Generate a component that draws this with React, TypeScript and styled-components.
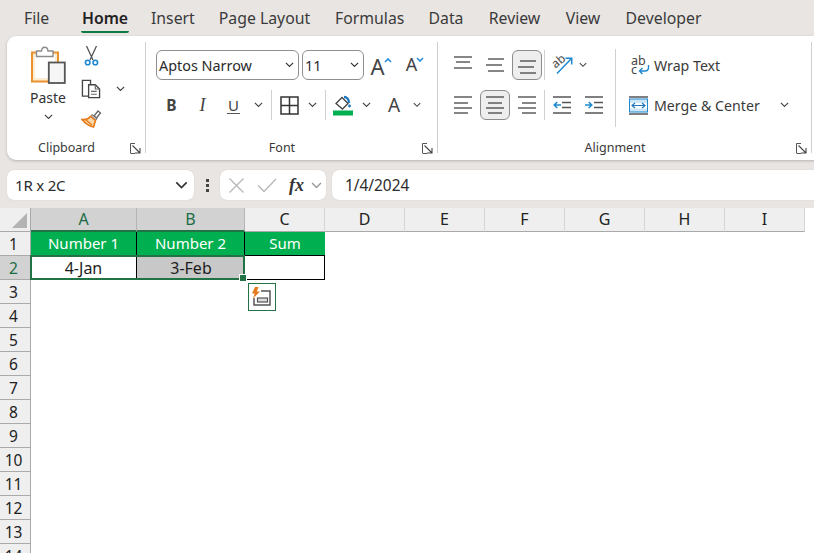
import React from "react";
import styled, { createGlobalStyle } from "styled-components";

const Global = createGlobalStyle`
  html, body { margin: 0; padding: 0; background: #e9e5e3; }
  * { box-sizing: border-box; }
`;

const UI = `"Noto Sans", "Open Sans", "Liberation Sans", sans-serif`;
const GREEN = "#217346";

const Page = styled.div`
  width: 814px; height: 553px; overflow: hidden; background: #e9e5e3;
  font-family: ${UI}; color: #333; display: flex; flex-direction: column;
`;
const TabBar = styled.nav`
  height: 36px; display: flex; align-items: flex-start; padding-left: 24px; flex: none;
`;
const Tab = styled.div<{ $w: number; $active?: boolean }>`
  width: ${p => p.$w}px; flex: none;
  height: 33px; line-height: 36px; font-size: 15.8px; white-space: nowrap; text-align: center;
  color: ${p => (p.$active ? "#222" : "#3a3a3a")};
  font-weight: ${p => (p.$active ? 600 : 400)};
  border-bottom: 2.5px solid ${p => (p.$active ? "#0e7a43" : "transparent")};
  border-radius: 0 0 2px 2px;
`;
const TabGap = styled.div<{ $w: number }>`
  width: ${p => p.$w}px; flex: none;
`;
const Ribbon = styled.section`
  flex: none; height: 124px; width: 830px; margin-left: 7px; padding: 6px 0 7px;
  background: #fff; border-radius: 9px; box-shadow: 0 1px 3px rgba(0,0,0,.22); display: flex;
`;
const Group = styled.div<{ $w: number }>`
  width: ${p => p.$w}px; flex: none; display: flex; flex-direction: column; border-right: 1px solid #cfcfcf;
`;
const GroupBody = styled.div<{ $top?: number; $left?: number }>`
  height: 95px; flex: none; display: flex; padding-top: ${p => p.$top ?? 8}px; padding-left: ${p => p.$left ?? 10}px;
`;
const Footer = styled.div`
  height: 16px; flex: none; display: flex; align-items: center; padding: 4px 4px 0 0;
`;
const GroupLabel = styled.div`
  flex: 1; text-align: center; font-size: 12.5px; line-height: 16px; color: #3a3a3a; margin-right: 4px; padding-top: 1px;
`;
const Launcher = styled.svg`
  width: 11px; height: 11px; flex: none; margin-top: 2px;
`;
const PasteCol = styled.div`
  width: 50px; margin-left: 9px; display: flex; flex-direction: column; align-items: center; padding-top: 4px;
`;
const PasteLabel = styled.div`
  font-size: 14px; line-height: 20px; margin-top: 4px; color: #333;
`;
const PasteChevron = styled.div`
  display: flex; margin-top: 6px;
`;
const SmallCol = styled.div`
  margin-left: 2px; display: flex; flex-direction: column;
`;
const SmallRow = styled.div`
  height: 31px; display: flex; align-items: center;
`;
const Stack = styled.div`
  display: flex; flex-direction: column; gap: 10px;
`;
const Row = styled.div`
  height: 30px; display: flex; align-items: center;
`;
const Btn = styled.div<{ $w: number; $ml?: number; $on?: boolean }>`
  width: ${p => p.$w}px; height: 30px; flex: none; margin-left: ${p => p.$ml ?? 0}px;
  display: flex; align-items: center; justify-content: center; border-radius: 6px;
  border: 1px solid ${p => (p.$on ? "#8c8c8c" : "transparent")};
  background: ${p => (p.$on ? "#eeeeee" : "transparent")};
`;
const Divider = styled.div<{ $ml?: number }>`
  width: 1px; height: 30px; background: #d0d0d0; flex: none; margin-left: ${p => p.$ml ?? 0}px;
`;
const Select = styled.div<{ $w: number; $ml?: number }>`
  width: ${p => p.$w}px; height: 30px; flex: none; margin-left: ${p => p.$ml ?? 0}px;
  border: 1px solid #8f8f8f; border-radius: 6px; display: flex; align-items: center; justify-content: space-between;
  padding: 0 4px 0 2px; font-size: 14.4px; color: #2b2b2b; background: #fff;
`;
const BoldGlyph = styled.span`font: 700 15.5px ${UI}; color: #444;`;
const ItalicGlyph = styled.span`font: italic 400 18px "Liberation Serif", serif; color: #444;`;
const UnderGlyph = styled.span`font: 400 15px ${UI}; color: #444; border-bottom: 1.5px solid #555; line-height: 16px; padding: 0 1px;`;
const LetterGlyph = styled.span<{ $size: number }>`
  font: 400 ${p => p.$size}px ${UI}; color: #444; line-height: 1;
`;
const CaretWrap = styled.div`
  display: flex; align-items: flex-start; height: 20px;
`;
const CaretSvg = styled.svg`
  margin: 2px 0 0 -1px;
`;
const AlignLeft = styled.div`
  display: flex; flex-direction: column; gap: 10px;
`;
const AlignRight = styled.div`
  margin-left: 6px; margin-top: -1px; height: 78px; border-left: 1px solid #d0d0d0; padding: 1px 0 0 13px;
  display: flex; flex-direction: column; gap: 10px;
`;
const ActionRow = styled.div`
  height: 30px; display: flex; align-items: center; font-size: 14.2px; color: #3a3a3a; white-space: nowrap;
`;
const ActionIcon = styled.div<{ $w: number; $ml: number }>`
  width: ${p => p.$w}px; margin-left: ${p => p.$ml}px; height: 21px; flex: none; position: relative;
  display: flex; align-items: center;
`;
const ActionGrow = styled.div<{ $w: number }>`
  width: ${p => p.$w}px;
`;
const StackedLetters = styled.span<{ $top: number }>`
  position: absolute; left: 0; top: ${p => p.$top}px; font: 400 12.5px/9px ${UI}; color: #444;
`;
const OrientBox = styled.div`
  width: 22px; height: 20px; position: relative;
`;
const RotatedLetters = styled.span`
  position: absolute; left: 0; top: 0; font: 400 12px/12px ${UI}; color: #444; transform: rotate(-40deg); transform-origin: 7px 7px;
`;
const IconDown = styled.svg`
  margin-bottom: 4px;
`;
const FormulaBar = styled.div`
  flex: none; height: 30px; margin: 10px 0 8px 7px; display: flex; align-items: stretch;
`;
const NameBox = styled.div`
  width: 187px; background: #fff; border-radius: 7px; display: flex; align-items: center; justify-content: space-between;
  padding: 0 6px 0 8px; font-size: 15px; letter-spacing: -0.2px; color: #2b2b2b; box-shadow: 0 0 1px rgba(0,0,0,.2);
`;
const Dots = styled.div`
  width: 26px; display: flex; flex-direction: column; align-items: center; justify-content: center; gap: 2px;
  & > i { width: 3px; height: 3px; background: #444; display: block; }
`;
const FnBox = styled.div`
  width: 106px; background: #fff; border-radius: 7px; display: flex; align-items: center; padding-left: 8px;
  box-shadow: 0 0 1px rgba(0,0,0,.2);
`;
const FnGap = styled.div`
  width: 12px;
`;
const FxGlyph = styled.span`
  font: italic 700 18px "Liberation Serif", serif; color: #333; margin-left: 12px; width: 22px;
`;
const FormulaInput = styled.div`
  flex: 1; margin-left: 6px; background: #fff; border-radius: 7px 0 0 7px; display: flex; align-items: center;
  padding-left: 13px; font-size: 15.4px; color: #2b2b2b; box-shadow: 0 0 1px rgba(0,0,0,.2);
`;

const Sheet = styled.div`
  flex: 1; background: #fff; display: grid; overflow: hidden; font-size: 15px;
  grid-template-columns: 31px 106px 108px repeat(7, 80px);
  grid-auto-rows: 24px; width: 900px;
`;
const Corner = styled.div`
  background: #efefef; border-right: 1px solid #aaa; border-bottom: 1px solid #aaa;
  display: flex; align-items: flex-end; justify-content: flex-end; padding: 0 3px 3px 0;
`;
const ColHead = styled.div<{ $sel?: boolean }>`
  display: flex; align-items: center; justify-content: center; padding-bottom: 1px; font-size: 16px;
  background: ${p => (p.$sel ? "#d2d2d2" : "#efefef")};
  color: ${p => (p.$sel ? "#1b6b45" : "#222")};
  border-right: 1px solid ${p => (p.$sel ? "#b5b5b5" : "#d6d6d6")};
  border-bottom: ${p => (p.$sel ? `2px solid ${GREEN}` : "1px solid #aaa")};
`;
const RowHead = styled.div<{ $row: number; $sel?: boolean }>`
  grid-column: 1; grid-row: ${p => p.$row + 1}; font-size: 15.5px;
  display: flex; align-items: center; justify-content: center; padding-right: 3px;
  background: ${p => (p.$sel ? "#d2d2d2" : "#efefef")};
  color: ${p => (p.$sel ? "#1b6b45" : "#222")};
  border-right: 1px solid #aaa;
  border-bottom: 1px solid #aaa;
`;
const Cell = styled.div<{ $row: number; $col: number; $variant: "head" | "headLast" | "val" | "grey" | "box" }>`
  grid-column: ${p => p.$col + 1}; grid-row: ${p => p.$row + 1};
  display: flex; align-items: center; justify-content: center; color: #1c1c1c; padding-bottom: 1px;
  ${p => (p.$variant === "head" || p.$variant === "headLast") && `
    background: #00b050; color: #fff; border-bottom: 1px solid #000;
  `}
  ${p => p.$variant === "head" && `border-right: 1px solid #000;`}
  ${p => p.$variant === "val" && `border-right: 1px solid #000; font-size: 16px;`}
  ${p => p.$variant === "grey" && `background: #c8c8c8; font-size: 16px;`}
  ${p => p.$variant === "box" && `border-right: 1px solid #000; border-bottom: 1px solid #000;`}
`;
const Selection = styled.div`
  grid-column: 2 / 4; grid-row: 3; position: relative; margin: -1px 0 0 -1px; border: 2px solid ${GREEN};
  pointer-events: none; height: 25px;
`;
const Handle = styled.div`
  position: absolute; right: -3px; bottom: -3px; width: 6px; height: 6px; background: ${GREEN}; outline: 1px solid #fff;
`;
const QuickBtn = styled.div`
  position: absolute; left: calc(100% + 5px); top: calc(100% + 5px); width: 28px; height: 28px; border: 1px solid ${GREEN};
  background: #fff; display: flex; align-items: center; justify-content: center;
`;

const Chevron = ({ c = "#444", w = 9 }: { c?: string; w?: number }) => (
  <svg width={w} height={w * 0.6} viewBox="0 0 10 6" fill="none">
    <path d="M1 1l4 4 4-4" stroke={c} strokeWidth="1.3" />
  </svg>
);

const LauncherIcon = () => (
  <Launcher viewBox="0 0 11 11" fill="none">
    <path d="M5 .5H.5V10" stroke="#555" strokeWidth="1" />
    <path d="M2.5 2.5l7 7M5 10h5V5" stroke="#444" strokeWidth="1.1" />
    <path d="M.5 10.5H5" stroke="#555" strokeWidth="1" />
  </Launcher>
);

const PasteIcon = () => (
  <svg width="35" height="38" viewBox="0 0 35 38" fill="none">
    <rect x="1" y="6.5" width="26" height="29" fill="#fdeccf" stroke="#e8912d" strokeWidth="2" />
    <rect x="4" y="9" width="20" height="23" fill="#fff" />
    <path d="M5.5 10.5V5h5c.5-5 6-5 6.5 0h5v5.5z" fill="#fff" stroke="#8c8c8c" strokeWidth="1.4" />
    <rect x="17.8" y="16.5" width="16" height="20.5" fill="#f6f6f6" stroke="#555" strokeWidth="1.8" />
  </svg>
);
const ScissorsIcon = () => (
  <IconDown width="15" height="21" viewBox="0 0 15 21" fill="none">
    <path d="M2.5 1l6.5 14M12.5 1L6 15" stroke="#555" strokeWidth="1.3" />
    <circle cx="3.7" cy="17.5" r="2.3" stroke="#1e88d0" strokeWidth="1.6" />
    <circle cx="11.3" cy="17.5" r="2.3" stroke="#1e88d0" strokeWidth="1.6" />
  </IconDown>
);
const CopyIcon = () => (
  <svg width="20" height="20" viewBox="0 0 21 21" fill="none">
    <path d="M8 18H1.5V1.5H10v4" stroke="#444" strokeWidth="1.4" />
    <path d="M8 6h7l4.5 4.5V19.5H8z" fill="#fff" stroke="#444" strokeWidth="1.4" />
    <path d="M15 6v4.5h4.5M10.5 13h6M10.5 16h6" stroke="#666" strokeWidth="1.2" />
  </svg>
);
const BrushIcon = () => (
  <IconDown width="21" height="20" viewBox="0 0 21 20" fill="none">
    <path d="M13 8l4-5 2.5 2-4 5z" fill="#fff" stroke="#666" strokeWidth="1.3" />
    <path d="M11 6.5l5 4-1.5 2-5-4z" fill="#bbb" stroke="#666" strokeWidth="1" />
    <path d="M9.5 8.5l5 4-2 6.5C8 18 3.5 14.5 1 11.5c3.5.5 6.5-.5 8.5-3z" fill="#fbd9a8" stroke="#e8791a" strokeWidth="1.6" />
    <path d="M5 12l6 5" stroke="#e8791a" strokeWidth="1.3" />
  </IconDown>
);
const BordersIcon = () => (
  <svg width="19" height="19" viewBox="0 0 19 19" fill="none">
    <rect x="1" y="1" width="17" height="17" stroke="#333" strokeWidth="1.5" />
    <path d="M9.5 1v17M1 9.5h17" stroke="#333" strokeWidth="1.5" />
  </svg>
);
const FillIcon = () => (
  <svg width="20" height="21" viewBox="0 0 20 21" fill="none">
    <path d="M3 8.5L9 2.5l6 6-5.5 5.5z" fill="#fff" stroke="#444" strokeWidth="1.3" />
    <path d="M11 2c3 0 5 2.5 5 6" stroke="#1e78c0" strokeWidth="2.4" />
    <circle cx="16.5" cy="11" r="1.4" fill="#1e78c0" />
    <rect x="0" y="15.5" width="20" height="5" fill="#00b050" />
  </svg>
);
const Caret = ({ down }: { down?: boolean }) => (
  <CaretSvg width="8" height="6" viewBox="0 0 8 6" fill="none">
    <path d={down ? "M1 1l3 3 3-3" : "M1 5l3-3 3 3"} stroke="#2a8fd8" strokeWidth="1.6" />
  </CaretSvg>
);
type Line = [number, number, number];
const Lines = ({ lines }: { lines: Line[] }) => (
  <svg width="20" height="22" viewBox="0 0 20 22" fill="none">
    {lines.map(([a, b, y], i) => (
      <path key={i} d={`M${a} ${y}H${b}`} stroke="#444" strokeWidth="1.3" />
    ))}
  </svg>
);
const OrientIcon = () => (
  <OrientBox>
    <RotatedLetters>ab</RotatedLetters>
    <svg width="22" height="20" viewBox="0 0 22 20" fill="none">
      <path d="M5 18.5L19 4" stroke="#1e88d0" strokeWidth="1.5" />
      <path d="M13.5 3.3h6.2v6.2" stroke="#1e88d0" strokeWidth="1.5" />
    </svg>
  </OrientBox>
);
const IndentIcon = ({ dir }: { dir: "in" | "out" }) => (
  <svg width="18" height="18" viewBox="0 0 18 18" fill="none">
    <path d="M0 1h18M0 17h18M9 6.5h9M9 11.5h9" stroke="#555" strokeWidth="1.3" />
    {dir === "out" ? (
      <path d="M8 9H1.2M4.3 6L1.2 9l3.1 3" stroke="#1e88d0" strokeWidth="1.5" />
    ) : (
      <path d="M0 9h6.8M3.7 6l3.1 3-3.1 3" stroke="#1e88d0" strokeWidth="1.5" />
    )}
  </svg>
);
const WrapIcon = () => (
  <ActionIcon $w={23} $ml={2}>
    <StackedLetters $top={1}>ab</StackedLetters>
    <StackedLetters $top={10}>c</StackedLetters>
    <svg width="19" height="21" viewBox="0 0 19 21" fill="none">
      <path d="M17.5 10v2.5c0 2.5-1.5 3.5-3.5 3.5H8.5M11.5 13l-3 3 3 3" stroke="#1e88d0" strokeWidth="1.4" />
    </svg>
  </ActionIcon>
);
const MergeIcon = () => (
  <ActionIcon $w={25} $ml={0}>
    <svg width="19" height="19" viewBox="0 0 19 19" fill="none">
      <rect x=".5" y="3" width="18" height="13" fill="#cfe6f7" stroke="#1e88d0" />
      <path d="M0 1h19M0 18h19" stroke="#555" strokeWidth="1.3" />
      <rect x="1" y="7" width="17" height="5.5" fill="#fff" />
      <path d="M3 9.5h13M6 7L3 9.5 6 12M13 7l3 2.5L13 12" stroke="#1e78c0" strokeWidth="1.2" />
    </svg>
  </ActionIcon>
);
const CancelIcon = () => (
  <svg width="17" height="17" viewBox="0 0 17 17" fill="none">
    <path d="M1.5 1.5l14 14M15.5 1.5l-14 14" stroke="#b8b8b8" strokeWidth="1.4" />
  </svg>
);
const CheckIcon = () => (
  <svg width="20" height="15" viewBox="0 0 20 15" fill="none">
    <path d="M1 7.5l6 6L19 1" stroke="#b8b8b8" strokeWidth="1.4" />
  </svg>
);
const CornerIcon = () => (
  <svg width="15" height="15" viewBox="0 0 15 15"><path d="M15 0v15H0z" fill="#b3b3b3" /></svg>
);
const QuickIcon = () => (
  <svg width="20" height="20" viewBox="0 0 20 20" fill="none">
    <path d="M9 4h9v14H2v-7" stroke="#555" strokeWidth="1.5" />
    <rect x="5.5" y="11" width="10" height="4" fill="#ddd" stroke="#555" strokeWidth="1.2" />
    <path d="M6.5 0H3L0 6.5h2.7L1 11.5 8 4.5H4.8z" fill="#e8791a" />
  </svg>
);

const TABS: [string, number, number][] = [
  ["File", 25, 32], ["Home", 48, 22], ["Insert", 42, 25], ["Page Layout", 93, 24], ["Formulas", 69, 24],
  ["Data", 36, 24], ["Review", 53, 24], ["View", 36, 24], ["Developer", 77, 0],
];
const COLS = ["A", "B", "C", "D", "E", "F", "G", "H", "I"];
const ROWS = Array.from({ length: 14 }, (_, i) => i + 1);

export default function App() {
  return (
    <Page>
      <Global />
      <TabBar>
        {TABS.map(([t, w, g]) => (
          <React.Fragment key={t}>
            <Tab $w={w} $active={t === "Home"}>{t}</Tab>
            <TabGap $w={g} />
          </React.Fragment>
        ))}
      </TabBar>
      <Ribbon>
        <Group $w={139}>
          <GroupBody $top={0} $left={7}>
            <PasteCol>
              <PasteIcon />
              <PasteLabel>Paste</PasteLabel>
              <PasteChevron><Chevron /></PasteChevron>
            </PasteCol>
            <SmallCol>
              <SmallRow><Btn $w={32}><ScissorsIcon /></Btn></SmallRow>
              <SmallRow>
                <Btn $w={32}><CopyIcon /></Btn>
                <Btn $w={12} $ml={7}><Chevron /></Btn>
              </SmallRow>
              <SmallRow><Btn $w={32}><BrushIcon /></Btn></SmallRow>
            </SmallCol>
          </GroupBody>
          <Footer><GroupLabel>Clipboard</GroupLabel><LauncherIcon /></Footer>
        </Group>
        <Group $w={292}>
          <GroupBody>
            <Stack>
              <Row>
                <Select $w={143}>Aptos Narrow<Chevron c="#333" /></Select>
                <Select $w={62} $ml={3}>11<Chevron c="#333" /></Select>
                <Btn $w={34}>
                  <CaretWrap><LetterGlyph $size={22}>A</LetterGlyph><Caret /></CaretWrap>
                </Btn>
                <Btn $w={34}>
                  <CaretWrap><LetterGlyph $size={18}>A</LetterGlyph><Caret down /></CaretWrap>
                </Btn>
              </Row>
              <Row>
                <Btn $w={31}><BoldGlyph>B</BoldGlyph></Btn>
                <Btn $w={31}><ItalicGlyph>I</ItalicGlyph></Btn>
                <Btn $w={31}><UnderGlyph>U</UnderGlyph></Btn>
                <Btn $w={18}><Chevron /></Btn>
                <Divider $ml={4} />
                <Btn $w={34}><BordersIcon /></Btn>
                <Btn $w={12}><Chevron /></Btn>
                <Divider $ml={7} />
                <Btn $w={34}><FillIcon /></Btn>
                <Btn $w={12}><Chevron /></Btn>
                <Btn $w={36} $ml={4}><LetterGlyph $size={19}>A</LetterGlyph></Btn>
                <Btn $w={10}><Chevron /></Btn>
              </Row>
            </Stack>
          </GroupBody>
          <Footer><GroupLabel>Font</GroupLabel><LauncherIcon /></Footer>
        </Group>
        <Group $w={374}>
          <GroupBody>
            <AlignLeft>
              <Row>
                <Btn $w={30}><Lines lines={[[1, 19, 3], [3, 17, 8], [1, 19, 14]]} /></Btn>
                <Btn $w={30} $ml={2}><Lines lines={[[3, 19, 5], [1, 17, 11], [3, 19, 17]]} /></Btn>
                <Btn $w={30} $ml={2} $on><Lines lines={[[3, 19, 7], [1, 17, 13], [3, 19, 19]]} /></Btn>
                <Divider $ml={2} />
                <Btn $w={30} $ml={3}><OrientIcon /></Btn>
                <Btn $w={10}><Chevron /></Btn>
              </Row>
              <Row>
                <Btn $w={30}><Lines lines={[[1, 19, 3], [1, 15, 9], [1, 19, 14], [1, 15, 19]]} /></Btn>
                <Btn $w={30} $ml={2} $on><Lines lines={[[1, 19, 3], [3, 17, 9], [1, 19, 14], [3, 17, 19]]} /></Btn>
                <Btn $w={30} $ml={2}><Lines lines={[[1, 19, 3], [5, 19, 9], [1, 19, 14], [5, 19, 19]]} /></Btn>
                <Divider $ml={2} />
                <Btn $w={30} $ml={2}><IndentIcon dir="out" /></Btn>
                <Btn $w={30} $ml={2}><IndentIcon dir="in" /></Btn>
              </Row>
            </AlignLeft>
            <AlignRight>
              <ActionRow><WrapIcon />Wrap Text</ActionRow>
              <ActionRow>
                <MergeIcon />Merge &amp; Center
                <ActionGrow $w={20} />
                <Chevron />
              </ActionRow>
            </AlignRight>
          </GroupBody>
          <Footer><GroupLabel>Alignment</GroupLabel><LauncherIcon /></Footer>
        </Group>
      </Ribbon>
      <FormulaBar>
        <NameBox>1R x 2C<Chevron c="#333" w={13} /></NameBox>
        <Dots><i /><i /><i /></Dots>
        <FnBox>
          <CancelIcon />
          <FnGap />
          <CheckIcon />
          <FxGlyph>fx</FxGlyph>
          <Chevron c="#999" w={11} />
        </FnBox>
        <FormulaInput>1/4/2024</FormulaInput>
      </FormulaBar>
      <Sheet>
        <Corner><CornerIcon /></Corner>
        {COLS.map((c, i) => <ColHead key={c} $sel={i < 2}>{c}</ColHead>)}
        {ROWS.map(r => <RowHead key={r} $row={r} $sel={r === 2}>{r}</RowHead>)}
        <Cell $row={1} $col={1} $variant="head">Number 1</Cell>
        <Cell $row={1} $col={2} $variant="head">Number 2</Cell>
        <Cell $row={1} $col={3} $variant="headLast">Sum</Cell>
        <Cell $row={2} $col={1} $variant="val">4-Jan</Cell>
        <Cell $row={2} $col={2} $variant="grey">3-Feb</Cell>
        <Cell $row={2} $col={3} $variant="box" />
        <Selection>
          <Handle />
          <QuickBtn><QuickIcon /></QuickBtn>
        </Selection>
      </Sheet>
    </Page>
  );
}
